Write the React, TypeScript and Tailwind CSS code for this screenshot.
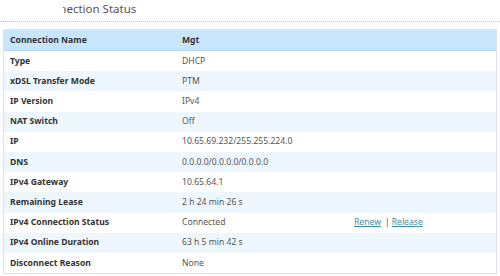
const rows: [string, string][] = [
  ["Type", "DHCP"],
  ["xDSL Transfer Mode", "PTM"],
  ["IP Version", "IPv4"],
  ["NAT Switch", "Off"],
  ["IP", "10.65.69.232/255.255.224.0"],
  ["DNS", "0.0.0.0/0.0.0.0/0.0.0.0"],
  ["IPv4 Gateway", "10.65.64.1"],
  ["Remaining Lease", "2 h 24 min 26 s"],
  ["IPv4 Connection Status", "Connected"],
  ["IPv4 Online Duration", "63 h 5 min 42 s"],
  ["Disconnect Reason", "None"],
];

export default function App() {
  return (
    <div className="w-[500px] h-[276px] bg-white overflow-hidden font-['Noto_Sans',sans-serif]">
      <div className="relative h-[21px] pl-[38px] pt-[1px] text-[11.5px] leading-[15px] text-[#555]">
        <div>Connection Status</div>
        <div className="absolute left-0 top-0 w-[63px] h-[21px] bg-white" />
      </div>
      <div className="border-t border-dotted border-[#d2c2a6]" />
      <div className="mt-[7px] mx-[3px] border border-[#dde3e8]">
        <div className="flex h-[21px] items-center bg-[#c7e5fc] border-b border-[#b7d5ec] text-[8.6px] font-bold text-[#333]">
          <div className="w-[170px] pl-[6px]">Connection Name</div>
          <div className="pl-[8px]">Mgt</div>
        </div>
        {rows.map(([label, value], i) => (
          <div
            key={label}
            className={`flex h-[20.2px] items-center text-[8.6px] ${i % 2 === 1 ? "bg-[#eef7fe]" : "bg-white"}`}
          >
            <div className="w-[170px] pl-[6px] font-bold text-[#333]">{label}</div>
            <div className="w-[180px] pl-[8px] text-[#555]">{value}</div>
            {label === "IPv4 Connection Status" && (
              <div className="flex items-center gap-[4px] text-[#3b8fa8]">
                <span className="underline">Renew</span>
                <span className="text-[#555]">|</span>
                <span className="underline -ml-[2px]">Release</span>
              </div>
            )}
          </div>
        ))}
      </div>
    </div>
  );
}
